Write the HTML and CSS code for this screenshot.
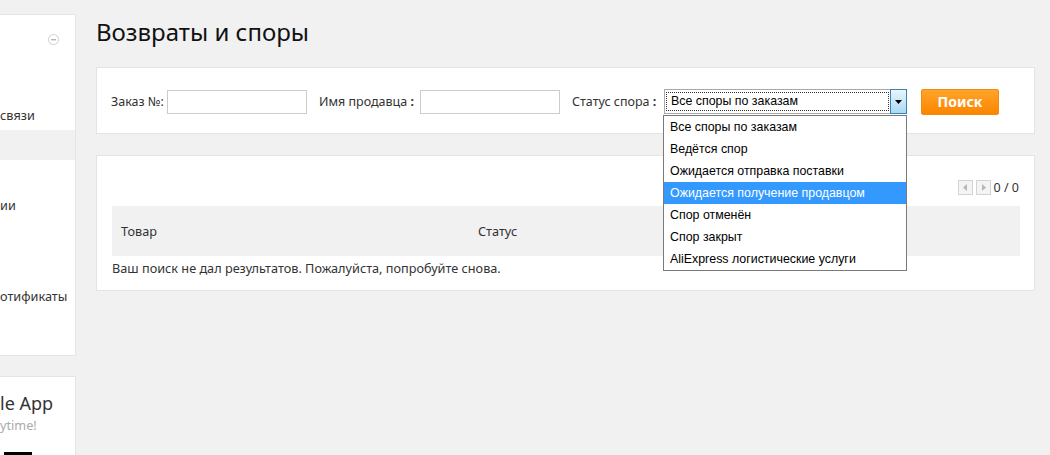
FILE: index.html
```html
<!DOCTYPE html>
<html lang="ru">
<head>
<meta charset="utf-8">
<title>Возвраты и споры</title>
<link rel="stylesheet" href="styles.css">
</head>
<body>
<div class="page">
  <aside class="sidebar">
    <div class="side-card">
      <div class="side-top">
        <span class="collapse-icon"><svg width="11" height="11" viewBox="0 0 11 11"><circle cx="5.5" cy="5.5" r="5" fill="none" stroke="#cfcfcf" stroke-width="1"/><rect x="3" y="5" width="5" height="1.4" fill="#b5b5b5"/></svg></span>
        <div class="side-item side-item-last">связи</div>
      </div>
      <div class="side-band"></div>
      <div class="side-body">
        <div class="side-item side-item-a">ии</div>
        <div class="side-item side-item-b">отификаты</div>
      </div>
    </div>
    <div class="side-card app-card">
      <div class="app-title">le App</div>
      <div class="app-sub">ytime!</div>
      <div class="app-bar"></div>
    </div>
  </aside>

  <main class="main">
    <h1 class="title">Возвраты и споры</h1>

    <section class="card search-card">
      <label class="lbl lbl-order">Заказ №:</label>
      <input class="field" type="text">
      <label class="lbl lbl-seller">Имя продавца <b>:</b></label>
      <input class="field" type="text">
      <label class="lbl lbl-status">Статус спора <b>:</b></label>
      <div class="select-wrap">
        <div class="select">
          <span class="select-value">Все споры по заказам</span>
          <span class="select-btn"><svg width="7" height="4" viewBox="0 0 7 4"><path d="M0 0h7L3.5 4z" fill="#000"/></svg></span>
        </div>
        <ul class="dropdown">
          <li>Все споры по заказам</li>
          <li>Ведётся спор</li>
          <li>Ожидается отправка поставки</li>
          <li class="active">Ожидается получение продавцом</li>
          <li>Спор отменён</li>
          <li>Спор закрыт</li>
          <li>AliExpress логистические услуги</li>
        </ul>
      </div>
      <button class="btn-search" type="button">Поиск</button>
    </section>

    <section class="card results-card">
      <div class="pager">
        <span class="pg-btn"><svg width="5" height="7" viewBox="0 0 5 7"><path d="M4 0v7L0 3.5z" fill="#b8b8b8"/></svg></span>
        <span class="pg-btn"><svg width="5" height="7" viewBox="0 0 5 7"><path d="M1 0v7L5 3.5z" fill="#b8b8b8"/></svg></span>
        <span class="pg-count">0 / 0</span>
      </div>
      <div class="thead">
        <div class="th th-item">Товар</div>
        <div class="th th-status">Статус</div>
      </div>
      <div class="empty">Ваш поиск не дал результатов. Пожалуйста, попробуйте снова.</div>
    </section>
  </main>
</div>
</body>
</html>
```

FILE: styles.css
```css
* { box-sizing: border-box; }
html, body { margin: 0; padding: 0; }
body {
  background: #f1f1f1;
  font-family: "Noto Sans", "Open Sans", sans-serif;
  font-size: 12.7px;
  color: #333;
  width: 1050px;
  height: 455px;
  overflow: hidden;
}
.page { display: flex; align-items: flex-start; }

/* sidebar */
.sidebar { width: 76px; flex: none; margin-top: 14px; }
.side-card {
  background: #fff;
  border: 1px solid #e4e4e4;
  border-left: none;
  position: relative;
}
.side-top { height: 115px; position: relative; display: flex; flex-direction: column; justify-content: flex-end; }
.collapse-icon { position: absolute; left: 48px; top: 19px; width: 11px; height: 11px; display: block; }
.collapse-icon svg { display: block; }
.side-band { height: 30px; background: #f1f1f1; }
.side-body { height: 195px; display: flex; flex-direction: column; }
.side-item { font-size: 12.7px; color: #333; line-height: 18px; white-space: nowrap; }
.side-item-last { margin-bottom: 6px; }
.side-item-a { margin-top: 36px; }
.side-item-b { margin-top: 73px; }
.app-card { margin-top: 20px; height: 100px; }
.app-title { font-size: 18px; color: #333; line-height: 22px; margin-top: 15px; }
.app-sub { font-size: 12.7px; color: #aaa; line-height: 18px; margin-top: 2px; }
.app-bar { width: 28px; height: 6px; background: #000; margin: 18px 0 0 4px; }

/* main */
.main { margin-left: 20px; width: 939px; }
.title {
  margin: 0;
  padding-top: 17px;
  font-family: "Noto Sans", "Open Sans", sans-serif;
  font-weight: normal;
  font-size: 24px;
  line-height: 30px;
  color: #111;
  height: 67px;
}
.card { background: #fff; border: 1px solid #e4e4e4; }

.search-card {
  height: 67px;
  display: flex;
  align-items: center;
  padding: 2px 0 0 14px;
}
.lbl { white-space: nowrap; color: #333; font-size: 12.5px; }
.lbl b { font-weight: bold; }
.lbl-order { width: 56px; }
.lbl-seller { width: 101px; }
.lbl-status { width: 92px; }
.field {
  width: 140px;
  height: 24px;
  border: 1px solid #cccccc;
  margin: 0 12px 0 0;
  padding: 0 4px;
  background: #fff;
}
.select-wrap { position: relative; width: 243px; height: 25px; margin-right: 14px; }
.select {
  display: flex;
  height: 25px;
  border: 1px solid #a9a9a9;
  border-right: none;
  background: #fff;
}
.select-value {
  flex: 1;
  margin: 2px 1px 2px 1px;
  border: 1px dotted #333;
  padding: 0 4px;
  font-family: "Liberation Sans", "Noto Sans", sans-serif;
  font-size: 12.4px;
  line-height: 17px;
  color: #000;
}
.select-btn {
  width: 17px;
  border: 1px solid #3c7fb1;
  margin-top: -1px;
  margin-bottom: -1px;
  background: linear-gradient(#eaf6fd, #a7d9f5);
  display: flex;
  align-items: center;
  justify-content: center;
}
.select-btn svg { display: block; }
.dropdown {
  position: absolute;
  left: -1px;
  top: 26px;
  width: 244px;
  margin: 0;
  padding: 0;
  list-style: none;
  background: #fff;
  border: 1px solid #7a7a7a;
  z-index: 5;
}
.dropdown li {
  height: 22px;
  line-height: 23px;
  padding: 0 6px;
  font-family: "Liberation Sans", "Noto Sans", sans-serif;
  font-size: 12.4px;
  color: #000;
  white-space: nowrap;
}
.dropdown li.active { background: #3399ff; color: #fff; }
.btn-search {
  width: 78px;
  height: 26px;
  border: 1px solid #f08a14;
  border-radius: 2px;
  background: linear-gradient(#ffa42b, #fb8500);
  color: #fff;
  font-family: "Noto Sans", sans-serif;
  font-weight: bold;
  font-size: 14px;
  padding: 0;
}

.results-card {
  margin-top: 21px;
  height: 136px;
  padding: 24px 14px 0 15px;
}
.pager { display: flex; justify-content: flex-end; align-items: center; height: 15px; gap: 3px; }
.pg-btn {
  width: 15px;
  height: 15px;
  border: 1px solid #d3d3d3;
  background: #f4f4f4;
  display: flex;
  align-items: center;
  justify-content: center;
}
.pg-btn svg { display: block; }
.pg-count { color: #333; font-size: 12.5px; line-height: 15px; margin-right: 1px; }
.thead {
  margin-top: 11px;
  height: 50px;
  background: #f1f1f1;
  display: flex;
  align-items: center;
}
.th { color: #333; font-size: 12.7px; }
.th-item { width: 366px; padding-left: 9px; }
.empty { margin-top: 3px; line-height: 18px; color: #333; font-size: 12.7px; }
```
